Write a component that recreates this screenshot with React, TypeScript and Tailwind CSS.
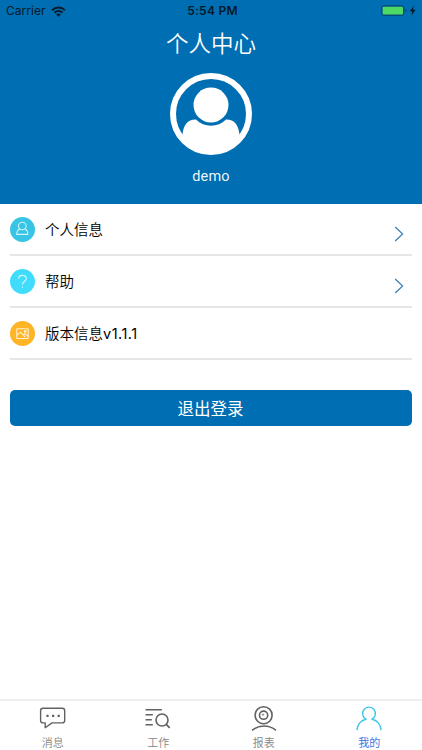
import React, { useState } from 'react';

type TabId = 'messages' | 'work' | 'reports' | 'mine';

const StatusBar: React.FC = () => (
    <div className="grid h-[22px] grid-cols-3 items-center pl-[6px] pr-[5px] text-[12px] leading-[22px] text-[#04192a]">
        <div className="flex items-center gap-[5px]">
            <span className="tracking-[0.05px]">Carrier</span>
            <svg className="h-[11px] w-[15px]" viewBox="0 0 15 11" fill="none" stroke="currentColor" strokeWidth="2">
                <path d="M1.1 4.2C4.7.7 10.3.7 13.9 4.2" />
                <path d="M3.5 6.7C5.8 4.5 9.2 4.5 11.5 6.7" />
                <path d="M7.5 10.7 5.2 8.4C6.5 7.2 8.5 7.2 9.8 8.4Z" fill="currentColor" stroke="none" />
            </svg>
        </div>
        <span className="pl-[2px] text-center font-semibold tracking-[0.25px]">5:54 PM</span>
        <svg className="h-[12px] w-[37px] justify-self-end" viewBox="0 0 37 12">
            <rect x="1.6" y="0.8" width="22.4" height="9.6" rx="2.4" fill="#04568b" stroke="#064a78" strokeWidth="1" />
            <rect x="2.6" y="1.8" width="20.4" height="7.6" rx="1" fill="#4cd964" />
            <path d="M25.5 3.8C27 4.4 27 6.8 25.5 7.4Z" fill="#064a78" />
            <path d="M34 0.6 29.8 6.2H32.4L31.3 10.4 35.6 4.8H32.8Z" fill="#04192a" />
        </svg>
    </div>
);

const Avatar: React.FC = () => (
    <svg className="h-[82px] w-[82px]" viewBox="0 0 82 82">
        <circle cx="41" cy="41" r="38" fill="none" stroke="#fff" strokeWidth="6" />
        <path d="M12.5 61.5C13.5 52 17.5 46.3 26 46.5 34 54.8 48 54.8 56 46.5 64.5 46.3 68.5 52 69.5 61.5A35.5 35.5 0 0 1 41 79 35.5 35.5 0 0 1 12.5 61.5Z" fill="#fff" />
        <circle cx="41" cy="32" r="17.5" fill="#fff" />
    </svg>
);

const Chevron: React.FC = () => (
    <svg className="mt-[9px] mr-[8px] h-[16px] w-[10px]" viewBox="0 0 10 16" fill="none" stroke="#367fb8" strokeWidth="1.2">
        <path d="M1.2 1 8.6 8 1.2 15" />
    </svg>
);

const PersonGlyph = (
    <>
        <circle cx="12.3" cy="9" r="3.8" />
        <path d="M9.8 12C7.6 12.8 6.7 14.6 6.8 17.4H17.8C17.9 14.6 17 12.8 14.8 12" />
    </>
);

const HelpGlyph = (
    <>
        <path d="M8.6 9.8C8.6 5.3 16.4 5.3 16.4 9.6 16.4 12.3 12.5 12.2 12.5 15.6" />
        <path d="M12.5 17.6V18.8" />
    </>
);

const PictureGlyph = (
    <>
        <rect x="6.8" y="7.7" width="11.4" height="9.8" rx="0.6" />
        <path d="M7 14.2 10.6 11.2 15.2 16M13.2 14 15 12.8 18.2 15.4" />
        <circle cx="15.2" cy="10.4" r="0.9" />
    </>
);

interface MenuRowProps {
    label: string;
    version?: string;
    badge: string;
    glyph: React.ReactNode;
    hasArrow?: boolean;
}

const MenuRow: React.FC<MenuRowProps> = ({ label, version, badge, glyph, hasArrow }) => (
    <div className="flex h-[52px] items-center border-b-2 border-[#e6e6e6]">
        <svg className={`h-[25px] w-[25px] shrink-0 rounded-full ${badge}`} viewBox="0 0 25 25" fill="none" stroke="#fff" strokeOpacity="0.8" strokeWidth="1.1">
            {glyph}
        </svg>
        <span className="ml-[10px] flex-1 pt-[2px] text-[14.5px] font-[350] text-black">
            {label}
            {version && <span className="font-normal tracking-[0.5px]">{version}</span>}
        </span>
        {hasArrow && <Chevron />}
    </div>
);

const tabs: { id: TabId; label: string; icon: React.ReactNode }[] = [
    {
        id: 'messages',
        label: '消息',
        icon: (
            <>
                <path d="M4 3.3H23.3A2.4 2.4 0 0 1 25.7 5.7V15.5A2.4 2.4 0 0 1 23.3 17.9H13L6.2 22.7V17.9H4A2.4 2.4 0 0 1 1.6 15.5V5.7A2.4 2.4 0 0 1 4 3.3Z" />
                <path d="M7.4 10.8H9.6M13 10.8H15.2M18.6 10.8H20.8" strokeWidth="2.2" />
            </>
        ),
    },
    {
        id: 'work',
        label: '工作',
        icon: (
            <>
                <path d="M1.5 4.7H17.8M1.5 9.7H8.8M1.5 14.7H7.8M1.5 19.7H8.8" strokeWidth="1.6" />
                <circle cx="18" cy="15" r="6" strokeWidth="1.6" />
                <path d="M22.2 19.3 25.7 22.8" strokeWidth="1.8" />
            </>
        ),
    },
    {
        id: 'reports',
        label: '报表',
        icon: (
            <>
                <circle cx="13.6" cy="10.2" r="8.5" strokeWidth="1.6" />
                <circle cx="13.6" cy="10.2" r="4.1" strokeWidth="1.6" />
                <circle cx="13" cy="9.6" r="0.7" strokeWidth="0.8" />
                <path d="M2 25.4C9 19.6 19 19.6 26 25.4" strokeWidth="1.5" />
            </>
        ),
    },
    {
        id: 'mine',
        label: '我的',
        icon: (
            <path d="M1.9 25.1C2.3 19.6 6 15 11.1 14.2A6.4 6.4 0 1 1 16.9 14.2C22 15 25.7 19.6 26.1 25.1" />
        ),
    },
];

const App: React.FC = () => {
    const [activeTab, setActiveTab] = useState<TabId>('mine');

    return (
        <div className="flex h-[750px] w-full flex-col bg-white font-[Inter,'Noto_Sans_CJK_SC',sans-serif]">
            <header className="h-[204px] bg-[#006eb2]">
                <StatusBar />
                <h1 className="pt-px text-center text-[22.5px] leading-[42px] font-[350] text-white">个人中心</h1>
                <div className="mt-[8px] flex flex-col items-center">
                    <Avatar />
                    <span className="mt-[11px] font-[Roboto,sans-serif] text-[14.5px] leading-[21px] tracking-[0.2px] text-white/95">demo</span>
                </div>
            </header>

            <main className="flex-1 px-[10px]">
                <MenuRow label="个人信息" badge="bg-[#38c4e4]" glyph={PersonGlyph} hasArrow />
                <MenuRow label="帮助" badge="bg-[#40dcfc]" glyph={HelpGlyph} hasArrow />
                <MenuRow label="版本信息" version="v1.1.1" badge="bg-[#ffb526]" glyph={PictureGlyph} />
                <button type="button" className="mt-[30px] h-[36px] w-full rounded-[5px] bg-[#006eb2] pr-px text-[16.5px] leading-[38px] font-normal text-white">
                    退出登录
                </button>
            </main>

            <nav className="grid h-[51px] grid-cols-4 border-t-2 border-[#efefef]">
                {tabs.map((tab) => (
                    <button
                        key={tab.id}
                        type="button"
                        onClick={() => setActiveTab(tab.id)}
                        className="flex flex-col items-center pt-[4px]"
                    >
                        <svg
                            className={`h-[27px] w-[28px] shrink-0 ${activeTab === tab.id ? 'text-[#3ec6e8]' : 'text-[#626262]'}`}
                            viewBox="0 0 28 27"
                            fill="none"
                            stroke="currentColor"
                            strokeWidth="1.4"
                            strokeLinejoin="round"
                        >
                            {tab.icon}
                        </svg>
                        <span className={`mt-[4px] text-[11px] leading-[14px] ${activeTab === tab.id ? 'text-[#3a78e0]' : 'font-[350] text-[#858585]'}`}>
                            {tab.label}
                        </span>
                    </button>
                ))}
            </nav>
        </div>
    );
};

export default App;
